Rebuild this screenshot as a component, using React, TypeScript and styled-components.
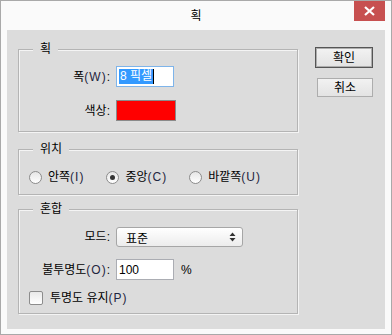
import React from "react";
import styled, { createGlobalStyle } from "styled-components";

const GlobalStyle = createGlobalStyle`
  html, body {
    margin: 0;
    padding: 0;
    background: #ffffff;
  }
  body {
    font-family: "Liberation Sans", "Noto Sans CJK KR", sans-serif;
    font-size: 12px;
    color: #000;
  }
`;

const Window = styled.div`
  width: 392px;
  height: 335px;
  box-sizing: border-box;
  border: 1px solid #a9a9a9;
  background: #fafafa;
  display: flex;
  flex-direction: column;
`;

const TitleBar = styled.div`
  height: 29px;
  display: grid;
  grid-template-columns: 1fr auto 1fr;
  align-items: center;
`;

const Title = styled.span`
  grid-column: 2;
  font-size: 12px;
  line-height: 16px;
  padding-top: 1px;
`;

const CloseButton = styled.div`
  grid-column: 3;
  justify-self: end;
  align-self: start;
  width: 31px;
  height: 20px;
  margin-right: 6px;
  background: #c75050;
  display: flex;
  align-items: center;
  justify-content: center;
`;

const Client = styled.div`
  flex: 1;
  margin: 0 6px 5px 6px;
  background: #dcdcdc;
  display: flex;
  align-items: flex-start;
  padding: 19px 0 0 11px;
  box-sizing: border-box;
`;

const Groups = styled.div`
  width: 280px;
  flex-shrink: 0;
  display: flex;
  flex-direction: column;
`;

const Group = styled.div<{ $top: number; $pad: string }>`
  position: relative;
  margin-top: ${(p) => p.$top}px;
  border: 1px solid #b4b4b4;
  box-shadow: inset 1px 1px 0 #f4f4f4, 1px 1px 0 #f4f4f4;
  padding: ${(p) => p.$pad};
`;

const Caption = styled.span`
  position: absolute;
  top: -9px;
  left: 14px;
  padding: 0 7px;
  background: #dcdcdc;
  line-height: 16px;
`;

const FormGrid = styled.div<{ $rows: string; $gap: string }>`
  display: grid;
  grid-template-columns: 91px auto;
  grid-template-rows: ${(p) => p.$rows};
  row-gap: ${(p) => p.$gap};
  column-gap: 6px;
  align-items: center;
`;

const Label = styled.span`
  justify-self: end;
  white-space: nowrap;
  line-height: 16px;
`;

const Key = styled.span`
  color: #1f2540;
  letter-spacing: 1px;
`;

const Field = styled.div<{ $focus?: boolean }>`
  width: 58px;
  height: 21px;
  box-sizing: border-box;
  border: 1px solid ${(p) => (p.$focus ? "#7eb4ea" : "#abadb3")};
  background: #fff;
  display: flex;
  align-items: center;
  padding-left: 2px;
`;

const Selected = styled.span`
  background: #3399ff;
  color: #fff;
  line-height: 15px;
  padding: 0 1px;
  border-right: 1px solid #000;
`;

const Swatch = styled.div`
  width: 60px;
  height: 21px;
  box-sizing: border-box;
  border: 1px solid #8a8a8a;
  background: #ff0000;
`;

const RadioRow = styled.div`
  display: flex;
  align-items: center;
  height: 16px;
  padding-left: 10px;
  gap: 22px;
`;

const Option = styled.label`
  display: flex;
  align-items: center;
  gap: 6px;
  line-height: 16px;
  white-space: nowrap;
`;

const Radio = styled.span<{ $checked?: boolean }>`
  flex-shrink: 0;
  width: 13px;
  height: 13px;
  box-sizing: border-box;
  border-radius: 50%;
  border: 1px solid #8c8c8c;
  background: linear-gradient(#e6e6e6, #ffffff);
  display: flex;
  align-items: center;
  justify-content: center;
  &::after {
    content: "";
    width: 5px;
    height: 5px;
    border-radius: 50%;
    background: ${(p) => (p.$checked ? "#333" : "transparent")};
  }
`;

const Select = styled.div`
  width: 127px;
  height: 20px;
  box-sizing: border-box;
  border: 1px solid #a6a6a6;
  border-radius: 3px;
  background: linear-gradient(#ffffff, #ececec);
  display: flex;
  align-items: center;
  justify-content: space-between;
  padding: 0 6px 0 9px;
`;

const InlineRow = styled.div`
  display: flex;
  align-items: center;
  gap: 7px;
`;

const CheckRow = styled.label`
  display: flex;
  align-items: center;
  gap: 7px;
  margin-top: 10px;
  padding-left: 10px;
  height: 16px;
  line-height: 16px;
`;

const Check = styled.span`
  flex-shrink: 0;
  width: 14px;
  height: 14px;
  box-sizing: border-box;
  border: 1px solid #8c8c8c;
  border-radius: 2px;
  background: linear-gradient(#e9e9e9, #ffffff);
`;

const Buttons = styled.div`
  display: flex;
  flex-direction: column;
  align-items: flex-start;
  margin: -2px 0 0 17px;
  gap: 10px;
`;

const Button = styled.div<{ $default?: boolean }>`
  width: 56px;
  height: 19px;
  box-sizing: border-box;
  border: 1px solid #adadad;
  background: linear-gradient(#f2f2f2, #e3e3e3);
  display: flex;
  align-items: center;
  justify-content: center;
  line-height: 16px;
  margin: ${(p) => (p.$default ? "1px 0 1px 1px" : "0 0 0 2px")};
  outline: ${(p) => (p.$default ? "1px solid #555" : "none")};
`;

const App = () => {
  return (
    <>
      <GlobalStyle />
      <Window>
        <TitleBar>
          <Title>획</Title>
          <CloseButton>
            <svg width="11" height="10" viewBox="0 0 11 10">
              <path d="M1 1 L10 9 M10 1 L1 9" stroke="#fff" strokeWidth="2.2" />
            </svg>
          </CloseButton>
        </TitleBar>
        <Client>
          <Groups>
            <Group $top={0} $pad="16px 0 10px 0">
              <Caption>획</Caption>
              <FormGrid $rows="21px 21px" $gap="13px">
                <Label>
                  폭<Key>(W)</Key>:
                </Label>
                <Field $focus>
                  <Selected>8 픽셀</Selected>
                </Field>
                <Label>색상:</Label>
                <Swatch />
              </FormGrid>
            </Group>

            <Group $top={17} $pad="19px 0 9px 0">
              <Caption>위치</Caption>
              <RadioRow>
                <Option>
                  <Radio />
                  <span>
                    안쪽<Key>(I)</Key>
                  </span>
                </Option>
                <Option>
                  <Radio $checked />
                  <span>
                    중앙<Key>(C)</Key>
                  </span>
                </Option>
                <Option>
                  <Radio />
                  <span>
                    바깥쪽<Key>(U)</Key>
                  </span>
                </Option>
              </RadioRow>
            </Group>

            <Group $top={14} $pad="17px 0 7px 0">
              <Caption>혼합</Caption>
              <FormGrid $rows="20px 21px" $gap="12px">
                <Label>모드:</Label>
                <Select>
                  <span>표준</span>
                  <svg width="7" height="10" viewBox="0 0 7 10">
                    <path d="M3.5 0.5 L6.5 4 H0.5 Z M3.5 9.5 L6.5 6 H0.5 Z" fill="#333" />
                  </svg>
                </Select>
                <Label>
                  불투명도<Key>(O)</Key>:
                </Label>
                <InlineRow>
                  <Field>100</Field>
                  <span>%</span>
                </InlineRow>
              </FormGrid>
              <CheckRow>
                <Check />
                <span>
                  투명도 유지<Key>(P)</Key>
                </span>
              </CheckRow>
            </Group>
          </Groups>
          <Buttons>
            <Button $default>확인</Button>
            <Button>취소</Button>
          </Buttons>
        </Client>
      </Window>
    </>
  );
};

export default App;
